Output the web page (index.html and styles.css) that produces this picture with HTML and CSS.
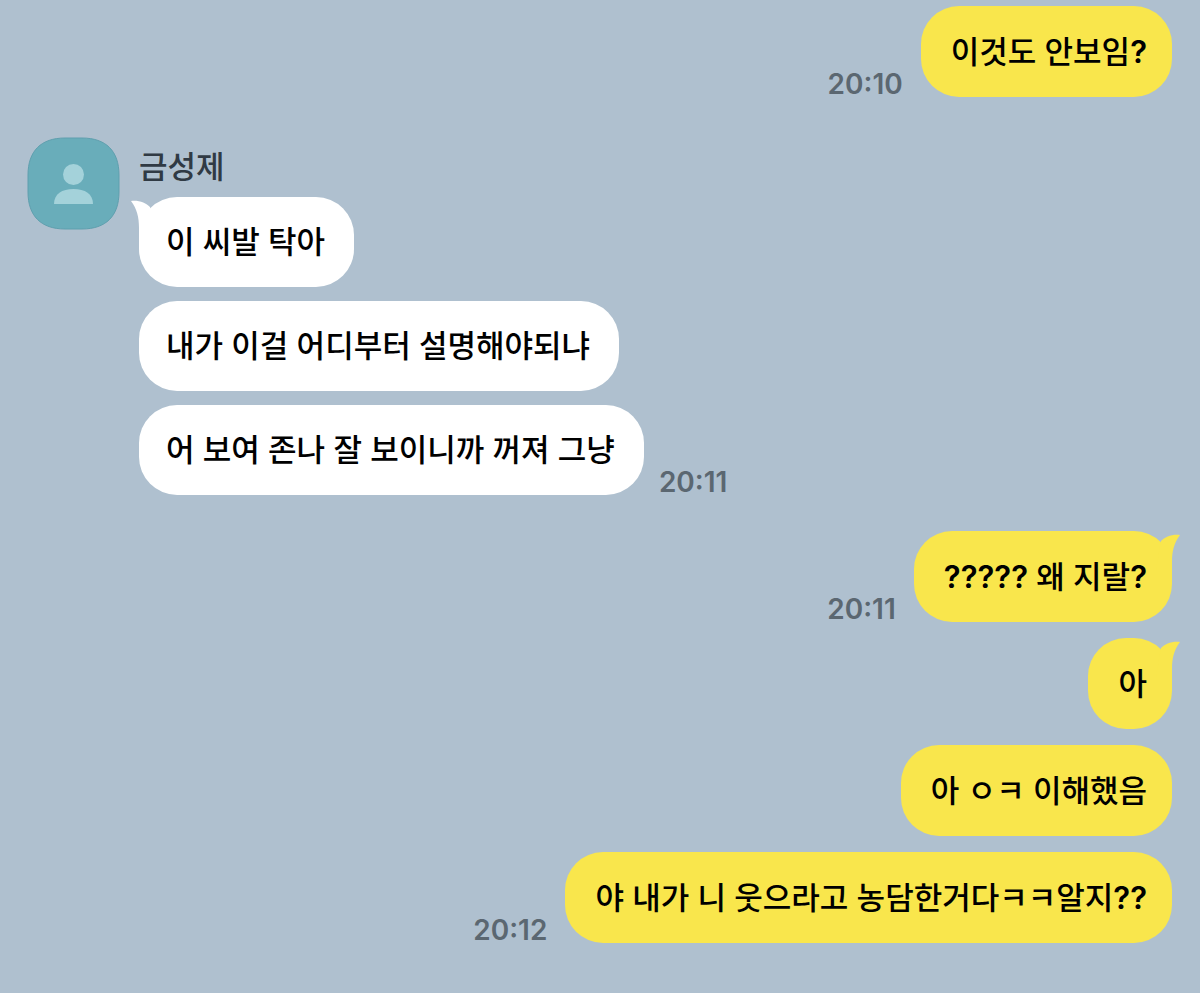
FILE: index.html
```html
<!DOCTYPE html>
<html lang="ko">
<head>
    <meta charset="UTF-8">
    <meta name="viewport" content="width=device-width, initial-scale=1.0">
    <title>금성제</title>
    <link rel="stylesheet" href="styles.css">
</head>
<body>
    <main class="chat">
        <section class="group sent">
            <div class="message">
                <p class="bubble">이것도 안보임<span class="mark">?</span></p>
                <time class="time">20:10</time>
            </div>
        </section>

        <section class="group received">
            <svg class="avatar" viewBox="0 0 93 93" aria-hidden="true">
                <path class="avatar-bg" d="M38 1H55C79 1 92 14 92 38V55C92 79 79 92 55 92H38C14 92 1 79 1 55V38C1 14 14 1 38 1Z"/>
                <circle class="avatar-person" cx="46.500" cy="37.500" r="10.500"/>
                <path class="avatar-person" d="M27 67C27 57 35 52 46.500 52S66 57 66 67Z"/>
            </svg>
            <div class="thread">
                <h2 class="name">금성제</h2>
                <div class="message">
                    <p class="bubble">
                        이 씨발 탁아
                        <svg class="tail" viewBox="0 0 24 36" aria-hidden="true">
                            <path d="M0 1C8 0 15 3 19 7L24 36H8V28C8 17 6 9 0 1Z"/>
                        </svg>
                    </p>
                </div>
                <div class="message">
                    <p class="bubble">내가 이걸 어디부터 설명해야되냐</p>
                </div>
                <div class="message">
                    <p class="bubble">어 보여 존나 잘 보이니까 꺼져 그냥</p>
                    <time class="time">20:11</time>
                </div>
            </div>
        </section>

        <section class="group sent">
            <div class="message">
                <p class="bubble">
                    <span class="mark">?????</span> 왜 지랄<span class="mark">?</span>
                    <svg class="tail" viewBox="0 0 24 36" aria-hidden="true">
                        <path d="M24 1C16 0 9 3 5 7L0 36H16V28C16 17 18 9 24 1Z"/>
                    </svg>
                </p>
                <time class="time">20:11</time>
            </div>
            <div class="message">
                <p class="bubble">
                    아
                    <svg class="tail" viewBox="0 0 24 36" aria-hidden="true">
                        <path d="M24 1C16 0 9 3 5 7L0 36H16V28C16 17 18 9 24 1Z"/>
                    </svg>
                </p>
            </div>
            <div class="message">
                <p class="bubble">아 ㅇㅋ 이해했음</p>
            </div>
            <div class="message">
                <p class="bubble">야 내가 니 웃으라고 농담한거다ㅋㅋ알지<span class="mark">??</span></p>
                <time class="time">20:12</time>
            </div>
        </section>
    </main>
</body>
</html>
```
FILE: styles.css
```css
body {
    margin: 0;
    background-color: #afc0cf;
    font-family: Inter, 'Noto Sans CJK KR', sans-serif;
    color: #000;
}
.chat {
    display: flex;
    flex-direction: column;
    padding: 6px 28px 48px;
}
.group {
    display: flex;
}
.sent {
    flex-direction: column;
    gap: 16px;
}
.received {
    gap: 19px;
    margin: 40px 0 36px;
}
.thread {
    display: flex;
    flex-direction: column;
    gap: 14px;
}
.message {
    display: flex;
    align-items: flex-end;
    gap: 15px;
}
.sent .message {
    flex-direction: row-reverse;
    gap: 18px;
}
.avatar {
    flex: none;
    width: 93px;
    height: 93px;
    margin-left: -1px;
}
.avatar-bg {
    fill: #69adba;
    stroke: #5f9fae;
    stroke-width: 1;
}
.avatar-person {
    fill: #a4d2da;
}
.name {
    margin: 0;
    height: 46px;
    line-height: 60px;
    font-size: 31px;
    font-weight: 500;
    color: #303a44;
}
.bubble {
    position: relative;
    margin: 0;
    padding: 24px 29px 24px 27px;
    border-radius: 38px;
    background-color: #fff;
    font-size: 31px;
    font-weight: 500;
    line-height: 42px;
}
.sent .bubble {
    padding: 25px 25px 24px 30px;
    background-color: #f9e64c;
}
.mark {
    font-weight: 600;
}
.time {
    font-size: 28px;
    font-weight: 600;
    line-height: 26px;
    color: #5b6771;
}
.tail {
    position: absolute;
    top: 3px;
    left: -8px;
    width: 24px;
    height: 36px;
    fill: #fff;
}
.sent .tail {
    left: auto;
    right: -8px;
    fill: #f9e64c;
}
```
